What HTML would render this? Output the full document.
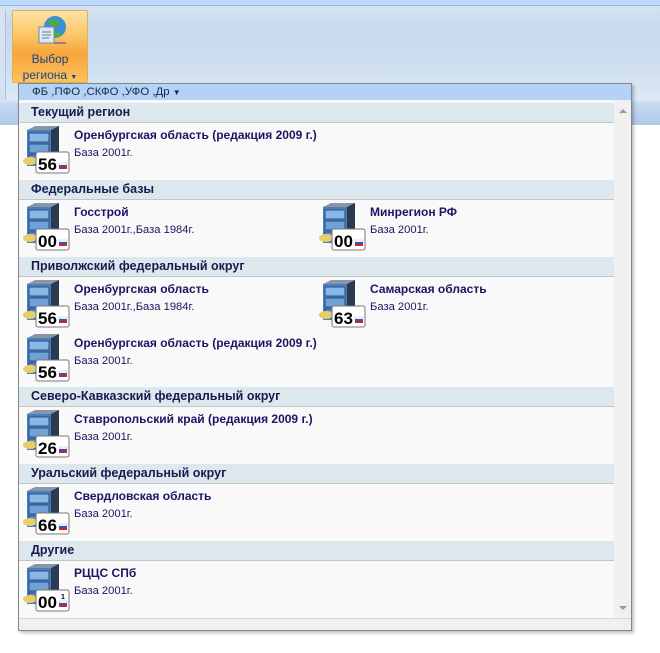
<!DOCTYPE html>
<html><head><meta charset="utf-8"><style>
*{margin:0;padding:0;box-sizing:border-box}
body{width:660px;height:653px;background:#fff;position:relative;overflow:hidden;font-family:"Liberation Sans","DejaVu Sans",sans-serif}
.ab{position:absolute}
.ribbon{left:0;top:0;width:660px;height:125px;background:linear-gradient(#dbe6f4 0,#c8d9ee 25px,#d0dff0 70px,#dde9f7 100px,#c5d8f0 104px,#b0c9ea 124px)}
.topline{left:0;top:0;width:660px;height:6px;background:#bcd8fb;border-bottom:1px solid #98b8e8}
.btn{left:12px;top:10px;width:76px;height:73px;border:1px solid #d9b25e;border-radius:2px;background:linear-gradient(#fde3a8,#fbc463 35%,#f8a53a 60%,#fbc25b)}
.btnt{left:12px;top:51px;width:76px;text-align:center;font-size:12px;color:#15428b;line-height:16px}
.dd{left:18px;top:83px;width:614px;height:548px;background:#f9f9f9;border:1px solid #868686;box-shadow:2px 2px 3px rgba(0,0,0,.25)}
.bar{left:19px;top:84px;width:612px;height:16px;background:#b4d2f5;font-size:11.4px;color:#15294b;padding-left:13px;line-height:16px}
.sec{left:19px;width:595px;height:20px;background:#dde7ee;border-bottom:1px solid #c5c5c5;font-size:12.5px;font-weight:bold;color:#1a1a4e;padding-left:12px;line-height:19px}
.sb{left:614px;top:100px;width:17px;height:518px;background:#f0f0f0}
.foot{left:19px;top:618px;width:612px;height:12px;background:#eef0f2;border-top:1px solid #d6d6d6}
.t{font-size:12px;font-weight:bold;color:#1b1464}
.s{font-size:11.2px;color:#1b1464}
.ic{width:48px;height:48px}
</style></head><body>
<div class="ab ribbon"></div>
<div class="ab topline"></div>
<div class="ab" style="left:0;top:10px;width:6px;height:90px;border-right:1px solid #a9c0df;background:#d5e2f2"></div>
<div class="ab btn"></div>
<svg class="ab" style="left:36px;top:13px" width="32" height="34"><circle cx="19" cy="14" r="11" fill="#3a8fd6"/><path d="M12 8q6-4 12 2q-3 6-8 3zM19 18q5 0 6 4q-4 3-7 1z" fill="#4cae3a"/><rect x="3" y="14" width="15" height="16" fill="#dfe8f3" stroke="#6c8db6"/><path d="M6 19h9M6 22h9M6 25h7" stroke="#5a7fb0"/><path d="M18 30h12" stroke="#888" stroke-width="2"/></svg>
<div class="ab btnt">Выбор<br>региона <span style="font-size:7px">▼</span></div>
<div class="ab dd"></div>
<div class="ab bar">ФБ ,ПФО ,СКФО ,УФО ,Др <span style="font-size:8px">▼</span></div>
<div class="ab sb"><div style="position:absolute;left:5px;top:9px;border:4px solid transparent;border-bottom-color:#999;border-top:0"></div><div style="position:absolute;left:5px;top:506px;border:4px solid transparent;border-top-color:#999;border-bottom:0"></div></div>
<div class="ab foot"></div>

<div class="ab sec" style="top:103px">Текущий регион</div>
<div class="ab sec" style="top:180px">Федеральные базы</div>
<div class="ab sec" style="top:257px">Приволжский федеральный округ</div>
<div class="ab sec" style="top:387px">Северо-Кавказский федеральный округ</div>
<div class="ab sec" style="top:464px">Уральский федеральный округ</div>
<div class="ab sec" style="top:541px">Другие</div>

<svg width="0" height="0" style="position:absolute"><defs>
<g id="cab"><path d="M5 4l8-4h24v36l-8 4H5z" fill="#8a96a8"/><rect x="5" y="4" width="24" height="36" fill="#4a7fbf"/><path d="M29 4l8-4v36l-8 4z" fill="#2c3a4f"/><rect x="7" y="7" width="20" height="9" fill="#8ab8e6" stroke="#274f85"/><rect x="7" y="18" width="20" height="9" fill="#6fa2d6" stroke="#274f85"/><rect x="7" y="29" width="20" height="9" fill="#5c8fc8" stroke="#274f85"/><ellipse cx="8" cy="35" rx="7" ry="4" fill="#e8cf68"/><rect x="14" y="26" width="33" height="21" rx="2" fill="#fff" stroke="#777"/><rect x="37" y="37" width="8" height="2" fill="#fff" stroke="#bbb" stroke-width=".5"/><rect x="37" y="39" width="8" height="2" fill="#2b56c4"/><rect x="37" y="41" width="8" height="2" fill="#d42020"/></g>
</defs></svg>

<div class="ab" style="left:22px;top:126px"><svg class="ic"><use href="#cab"/><text x="16" y="44" font-family="Liberation Sans" font-weight="bold" font-size="17">56</text></svg></div>
<div class="ab t" style="left:74px;top:128px">Оренбургская область (редакция 2009 г.)</div>
<div class="ab s" style="left:74px;top:147px">База 2001г.</div>

<div class="ab" style="left:22px;top:203px"><svg class="ic"><use href="#cab"/><text x="16" y="44" font-family="Liberation Sans" font-weight="bold" font-size="17">00</text></svg></div>
<div class="ab t" style="left:74px;top:205px">Госстрой</div>
<div class="ab s" style="left:74px;top:224px">База 2001г.,База 1984г.</div>
<div class="ab" style="left:318px;top:203px"><svg class="ic"><use href="#cab"/><text x="16" y="44" font-family="Liberation Sans" font-weight="bold" font-size="17">00</text></svg></div>
<div class="ab t" style="left:370px;top:205px">Минрегион РФ</div>
<div class="ab s" style="left:370px;top:224px">База 2001г.</div>

<div class="ab" style="left:22px;top:280px"><svg class="ic"><use href="#cab"/><text x="16" y="44" font-family="Liberation Sans" font-weight="bold" font-size="17">56</text></svg></div>
<div class="ab t" style="left:74px;top:282px">Оренбургская область</div>
<div class="ab s" style="left:74px;top:301px">База 2001г.,База 1984г.</div>
<div class="ab" style="left:318px;top:280px"><svg class="ic"><use href="#cab"/><text x="16" y="44" font-family="Liberation Sans" font-weight="bold" font-size="17">63</text></svg></div>
<div class="ab t" style="left:370px;top:282px">Самарская область</div>
<div class="ab s" style="left:370px;top:301px">База 2001г.</div>

<div class="ab" style="left:22px;top:334px"><svg class="ic"><use href="#cab"/><text x="16" y="44" font-family="Liberation Sans" font-weight="bold" font-size="17">56</text></svg></div>
<div class="ab t" style="left:74px;top:336px">Оренбургская область (редакция 2009 г.)</div>
<div class="ab s" style="left:74px;top:355px">База 2001г.</div>

<div class="ab" style="left:22px;top:410px"><svg class="ic"><use href="#cab"/><text x="16" y="44" font-family="Liberation Sans" font-weight="bold" font-size="17">26</text></svg></div>
<div class="ab t" style="left:74px;top:412px">Ставропольский край (редакция 2009 г.)</div>
<div class="ab s" style="left:74px;top:431px">База 2001г.</div>

<div class="ab" style="left:22px;top:487px"><svg class="ic"><use href="#cab"/><text x="16" y="44" font-family="Liberation Sans" font-weight="bold" font-size="17">66</text></svg></div>
<div class="ab t" style="left:74px;top:489px">Свердловская область</div>
<div class="ab s" style="left:74px;top:508px">База 2001г.</div>

<div class="ab" style="left:22px;top:564px"><svg class="ic"><use href="#cab"/><text x="16" y="44" font-family="Liberation Sans" font-weight="bold" font-size="17">00</text><text x="39" y="35" font-family="Liberation Sans" font-weight="bold" font-size="7">1</text></svg></div>
<div class="ab t" style="left:74px;top:566px">РЦЦС СПб</div>
<div class="ab s" style="left:74px;top:585px">База 2001г.</div>
</body></html>
